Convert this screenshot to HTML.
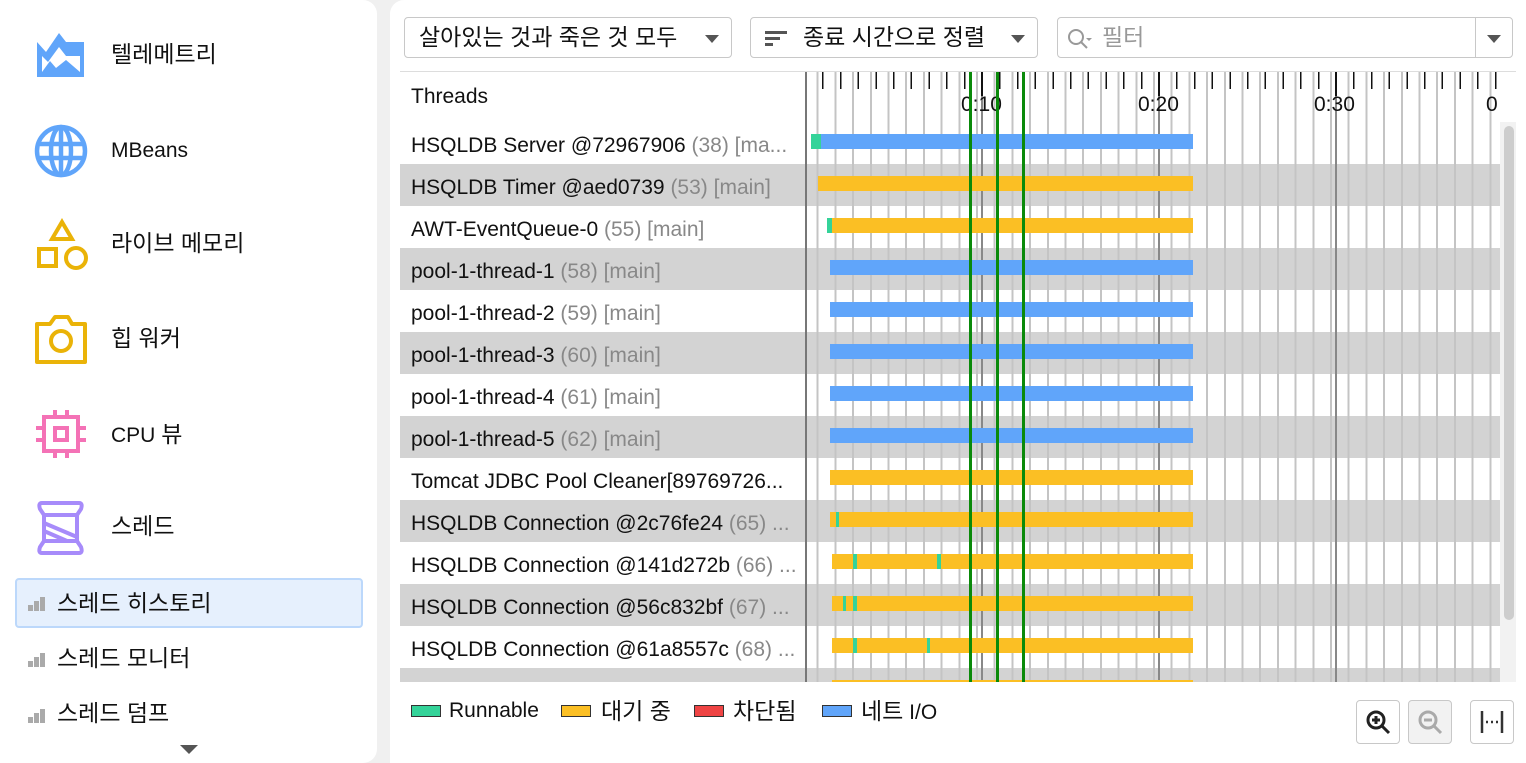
<!DOCTYPE html>
<html><head><meta charset="utf-8"><style>
*{box-sizing:border-box;margin:0;padding:0}
body{width:1526px;height:763px;background:#f0f0f0;font-family:"Liberation Sans","Noto Sans CJK KR",sans-serif;position:relative;overflow:hidden;color:#111}
.abs{position:absolute}
#side{left:0;top:0;width:377px;height:763px;background:#fff;border-radius:0 14px 14px 0}
.it{position:absolute;left:111px;font-size:23px;line-height:30px}
.sub{position:absolute;left:57px;font-size:23px;line-height:30px}
.bars{position:absolute;left:28px;width:18px;height:14px}
.bars i{position:absolute;bottom:0;background:#aaa;width:5px}
#main{left:390px;top:0;width:1136px;height:763px;background:#fff;border-radius:14px 0 0 0}
.dd{position:absolute;top:17px;height:41px;border:1px solid #c8c8c8;border-radius:4px;font-size:23px;line-height:39px;background:#fff;white-space:nowrap}
.tri{position:absolute;width:0;height:0;border-left:7px solid transparent;border-right:7px solid transparent;border-top:8px solid #555}
.row{position:absolute;left:400px;width:1100px;height:42px}
.row.g{background:#d3d3d3}
.lab{position:absolute;left:411px;font-size:21px;line-height:26px;white-space:nowrap;width:390px;overflow:hidden}
.lab span{color:#888}
.bar{position:absolute;height:15px}
.Y{background:#fbbf24}.B{background:#60a5fa}.G{background:#34d399}
.btn{position:absolute;top:700px;width:44px;height:44px;border:1px solid #c8c8c8;border-radius:4px;background:#fff}
.lg{position:absolute;top:705px;width:30px;height:12px;border:1px solid #333}
.lt{position:absolute;top:697px;font-size:21px;line-height:28px}
.k{font-size:23px}
</style></head><body>
<div id="side" class="abs">
 <svg class="abs" style="left:36px;top:32px" width="50" height="46" viewBox="0 0 50 46"><path d="M1 10 L10 20 L23 1 L30 10 L48 10 L48 45 L1 45Z" fill="#60a5fa"/><path d="M6 24 L12 30 L23 15 L30 24 L44 24 L44 40 L30 28 L20 36 L14 29 L6 40Z" fill="#fff"/></svg>
 <div class="it" style="top:39px">텔레메트리</div>
 <svg class="abs" style="left:34px;top:124px" width="54" height="54" viewBox="0 0 54 54" fill="none" stroke="#60a5fa" stroke-width="4.5"><circle cx="27" cy="27" r="24"/><ellipse cx="27" cy="27" rx="10" ry="24"/><path d="M3 20H51M3 34H51M27 3V51"/></svg>
 <div class="it" style="top:136px;font-size:21px">MBeans</div>
 <svg class="abs" style="left:36px;top:218px" width="52" height="54" viewBox="0 0 52 54" fill="none" stroke="#eab308" stroke-width="4"><path d="M26 4 L36 21 L16 21Z"/><rect x="3" y="31" width="17" height="17"/><circle cx="40" cy="40" r="10"/></svg>
 <div class="it" style="top:228px">라이브 메모리</div>
 <svg class="abs" style="left:34px;top:314px" width="54" height="50" viewBox="0 0 54 50" fill="none" stroke="#eab308" stroke-width="4"><path d="M3 10 H16 L21 3 H34 L38 10 H51 V48 H3Z" stroke-linejoin="round"/><circle cx="27" cy="27" r="10"/></svg>
 <div class="it" style="top:323px">힙 워커</div>
 <svg class="abs" style="left:36px;top:410px" width="50" height="48" viewBox="0 0 50 48" fill="none" stroke="#f472b6" stroke-width="4"><rect x="8" y="7" width="34" height="34"/><rect x="19" y="18" width="12" height="12"/><path d="M19 0V7M31 0V7M19 41V48M31 41V48M0 18H8M0 30H8M42 18H50M42 30H50"/></svg>
 <div class="it" style="top:419px;font-size:21px">CPU <span class="k">뷰</span></div>
 <svg class="abs" style="left:37px;top:501px" width="48" height="54" viewBox="0 0 48 54" fill="none" stroke="#a78bfa" stroke-width="4"><path d="M5 2 H42 Q46 2 44 8 L40 14 V40 L44 46 Q46 52 42 52 H5 Q1 52 3 46 L7 40 V14 L3 8 Q1 2 5 2Z"/><path d="M7 14H40M7 40H40M7 22 L40 36M7 30 L30 40"/></svg>
 <div class="it" style="top:511px">스레드</div>
 <div class="abs" style="left:15px;top:578px;width:348px;height:50px;background:#e6f0fd;border:2px solid #bcd8fb;border-radius:4px"></div>
 <div class="bars" style="top:597px"><i style="left:0;height:6px"></i><i style="left:6px;height:10px"></i><i style="left:12px;height:14px"></i></div>
 <div class="sub" style="top:588px">스레드 히스토리</div>
 <div class="bars" style="top:653px"><i style="left:0;height:6px"></i><i style="left:6px;height:10px"></i><i style="left:12px;height:14px"></i></div>
 <div class="sub" style="top:643px">스레드 모니터</div>
 <div class="bars" style="top:709px"><i style="left:0;height:6px"></i><i style="left:6px;height:10px"></i><i style="left:12px;height:14px"></i></div>
 <div class="sub" style="top:698px">스레드 덤프</div>
 <div class="tri" style="left:180px;top:745px;border-left-width:9px;border-right-width:9px;border-top-width:9px"></div>
</div>
<div id="main" class="abs"></div>
<div class="dd" style="left:404px;width:328px"><span style="margin-left:14px">살아있는 것과 죽은 것 모두</span><div class="tri" style="left:300px;top:17px"></div></div>
<div class="dd" style="left:750px;width:288px"><svg class="abs" style="left:14px;top:12px" width="24" height="16"><rect x="0" y="1" width="22" height="3" fill="#555"/><rect x="0" y="7" width="15" height="3" fill="#555"/><rect x="0" y="13" width="8" height="3" fill="#555"/></svg><span style="margin-left:52px">종료 시간으로 정렬</span><div class="tri" style="left:260px;top:17px"></div></div>
<div class="dd" style="left:1057px;width:456px"><svg class="abs" style="left:8px;top:9px" width="30" height="24" fill="none" stroke="#999" stroke-width="2"><circle cx="10" cy="10" r="7"/><path d="M15 15 L21 21"/><path d="M20 11 L26 11 L23 14Z" fill="#999" stroke="none"/></svg><span style="margin-left:44px;color:#999">필터</span><div class="abs" style="left:417px;top:0;width:1px;height:39px;background:#c8c8c8"></div><div class="tri" style="left:429px;top:17px"></div></div>
<div class="abs" style="left:400px;top:71px;width:1116px;height:1px;background:#ddd"></div>
<div class="abs" style="left:411px;top:84px;font-size:21px;line-height:26px">Threads</div>
<div class="row g" style="top:164px"></div><div class="row g" style="top:248px"></div><div class="row g" style="top:332px"></div><div class="row g" style="top:416px"></div><div class="row g" style="top:500px"></div><div class="row g" style="top:584px"></div><div class="row g" style="top:668px;height:14px"></div>
<div class="abs" style="left:806px;top:72px;width:694px;height:610px;background:repeating-linear-gradient(90deg,transparent 0,transparent 10.7px,#c4c4c4 10.7px,#c4c4c4 12.7px,transparent 12.7px,transparent 17.7px)"></div>
<div class="abs" style="left:806px;top:72px;width:694px;height:610px;background:repeating-linear-gradient(90deg,transparent 0,transparent 175px,#888 175px,#888 177px)"></div>
<div class="abs" style="left:806px;top:72px;width:694px;height:17px;background:repeating-linear-gradient(90deg,transparent 0,transparent 16.2px,#111 16.2px,#111 17.7px)"></div>
<div class="abs" style="left:805px;top:72px;width:2px;height:610px;background:#777"></div>
<div class="abs" style="left:981px;top:72px;width:2px;height:24px;background:#111"></div>
<div class="abs" style="left:1158px;top:72px;width:2px;height:24px;background:#111"></div>
<div class="abs" style="left:1335px;top:72px;width:2px;height:24px;background:#111"></div>
<div class="abs" style="left:961px;top:93px;font-size:21px;line-height:24px">0:10</div>
<div class="abs" style="left:1138px;top:93px;font-size:21px;line-height:24px">0:20</div>
<div class="abs" style="left:1314px;top:93px;font-size:21px;line-height:24px">0:30</div>
<div class="abs" style="left:1486px;top:93px;font-size:21px;line-height:24px;width:14px;overflow:hidden">0</div>
<div class="lab" style="top:133px">HSQLDB Server @72967906 <span>(38) [ma...</span></div>
<div class="lab" style="top:175px">HSQLDB Timer @aed0739 <span>(53) [main]</span></div>
<div class="lab" style="top:217px">AWT-EventQueue-0 <span>(55) [main]</span></div>
<div class="lab" style="top:259px">pool-1-thread-1 <span>(58) [main]</span></div>
<div class="lab" style="top:301px">pool-1-thread-2 <span>(59) [main]</span></div>
<div class="lab" style="top:343px">pool-1-thread-3 <span>(60) [main]</span></div>
<div class="lab" style="top:385px">pool-1-thread-4 <span>(61) [main]</span></div>
<div class="lab" style="top:427px">pool-1-thread-5 <span>(62) [main]</span></div>
<div class="lab" style="top:469px">Tomcat JDBC Pool Cleaner[89769726...</div>
<div class="lab" style="top:511px">HSQLDB Connection @2c76fe24 <span>(65) ...</span></div>
<div class="lab" style="top:553px">HSQLDB Connection @141d272b <span>(66) ...</span></div>
<div class="lab" style="top:595px">HSQLDB Connection @56c832bf <span>(67) ...</span></div>
<div class="lab" style="top:637px">HSQLDB Connection @61a8557c <span>(68) ...</span></div>
<div class="bar G" style="left:811px;top:134px;width:10px"></div><div class="bar B" style="left:821px;top:134px;width:372px"></div>
<div class="bar Y" style="left:818px;top:176px;width:375px"></div>
<div class="bar G" style="left:827px;top:218px;width:5px"></div><div class="bar Y" style="left:832px;top:218px;width:361px"></div>
<div class="bar B" style="left:830px;top:260px;width:363px"></div>
<div class="bar B" style="left:830px;top:302px;width:363px"></div>
<div class="bar B" style="left:830px;top:344px;width:363px"></div>
<div class="bar B" style="left:830px;top:386px;width:363px"></div>
<div class="bar B" style="left:830px;top:428px;width:363px"></div>
<div class="bar Y" style="left:830px;top:470px;width:363px"></div>
<div class="bar Y" style="left:830px;top:512px;width:363px"></div><div class="bar G" style="left:836px;top:512px;width:3px"></div>
<div class="bar Y" style="left:832px;top:554px;width:361px"></div><div class="bar G" style="left:853px;top:554px;width:4px"></div><div class="bar G" style="left:937px;top:554px;width:4px"></div>
<div class="bar Y" style="left:832px;top:596px;width:361px"></div><div class="bar G" style="left:843px;top:596px;width:3px"></div><div class="bar G" style="left:853px;top:596px;width:4px"></div>
<div class="bar Y" style="left:832px;top:638px;width:361px"></div><div class="bar G" style="left:853px;top:638px;width:4px"></div><div class="bar G" style="left:927px;top:638px;width:3px"></div>
<div class="bar Y" style="left:832px;top:680px;width:361px;height:2px"></div>
<div class="abs" style="left:969px;top:72px;width:3px;height:610px;background:#0a8a0a"></div>
<div class="abs" style="left:996px;top:72px;width:3px;height:610px;background:#0a8a0a"></div>
<div class="abs" style="left:1022px;top:72px;width:3px;height:610px;background:#0a8a0a"></div>
<div class="abs" style="left:1500px;top:122px;width:16px;height:560px;background:#f2f2f2"></div>
<div class="abs" style="left:1504px;top:126px;width:10px;height:494px;background:#cdcdcd;border-radius:5px"></div>
<div class="lg" style="left:411px;background:#34d399"></div><div class="lt" style="left:449px">Runnable</div>
<div class="lg" style="left:561px;background:#fbbf24"></div><div class="lt k" style="left:601px">대기 중</div>
<div class="lg" style="left:694px;background:#ef4444"></div><div class="lt k" style="left:733px">차단됨</div>
<div class="lg" style="left:822px;background:#60a5fa"></div><div class="lt" style="left:861px"><span class="k">네트</span> I/O</div>
<div class="btn" style="left:1356px"><svg width="42" height="42" fill="none" stroke="#222" stroke-width="3"><circle cx="19" cy="19" r="8"/><path d="M25 25 L32 32M15 19H23M19 15V23"/></svg></div>
<div class="btn" style="left:1408px;background:#f2f2f2"><svg width="42" height="42" fill="none" stroke="#aaa" stroke-width="3"><circle cx="19" cy="19" r="8"/><path d="M25 25 L32 32M15 19H23"/></svg></div>
<div class="btn" style="left:1470px"><svg width="42" height="42" fill="none" stroke="#333" stroke-width="2.5"><path d="M11 10V32M31 10V32"/><path d="M15 21H17M20 21H22M25 21H27"/></svg></div>
</body></html>
